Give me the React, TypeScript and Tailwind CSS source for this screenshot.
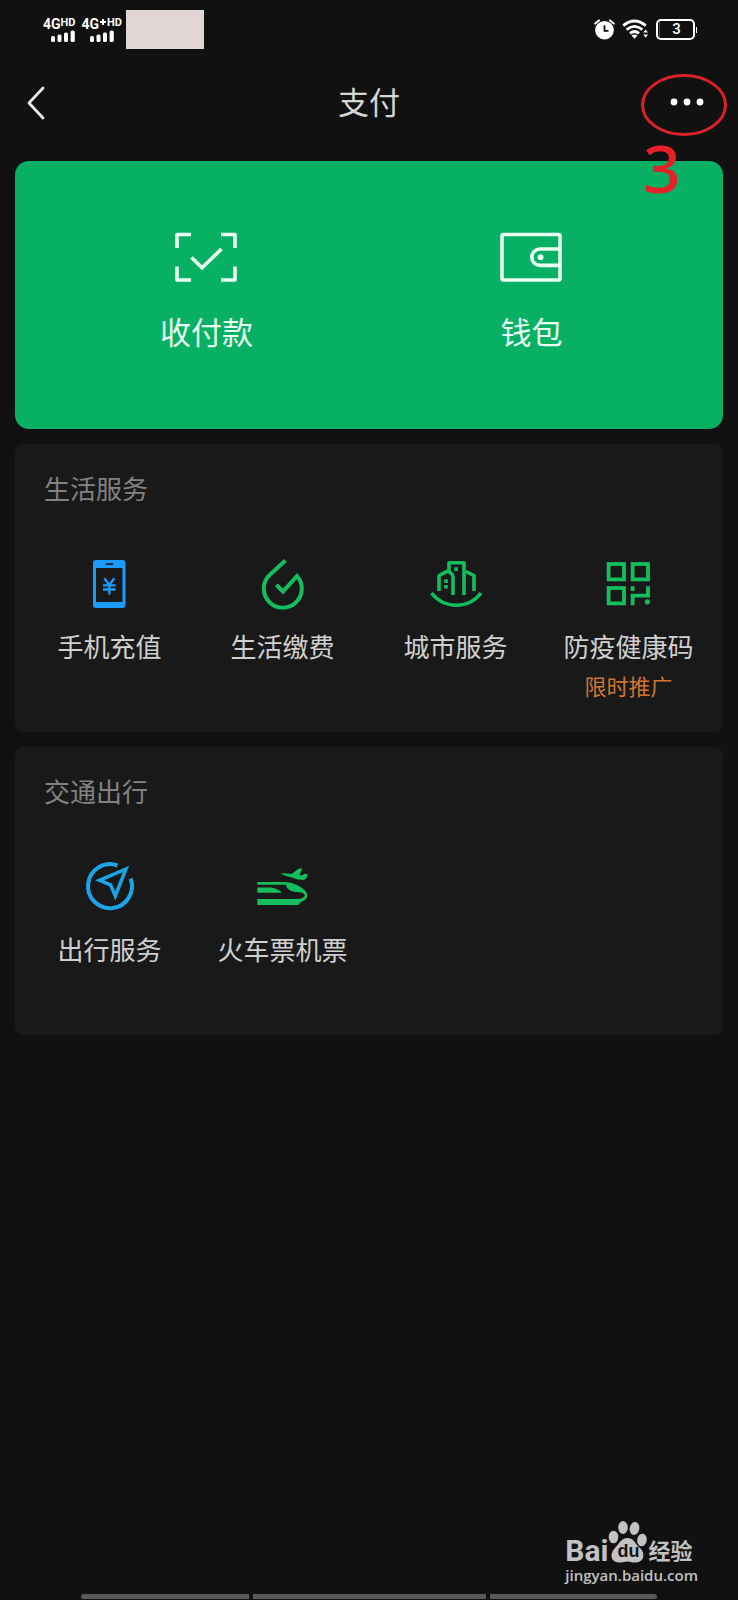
import type { ReactNode } from "react";

function SignalLabel({ plus = false }: { plus?: boolean }) {
  return (
    <div className="flex flex-col font-['Roboto',sans-serif] font-bold text-white">
      <div className="flex items-start">
        <span className="text-[14px] leading-[12px]">4G</span>
        {plus && (
          <svg width="8" height="8" viewBox="0 0 8 8" aria-hidden="true">
            <path d="M4 1v6M1 4h6" stroke="#fff" strokeWidth="2" />
          </svg>
        )}
        <span className="text-[11px] leading-[9px]">HD</span>
      </div>
      <svg className="ml-2" width="24" height="12" viewBox="0 0 24 12" aria-hidden="true">
        <g fill="#fff">
          <rect x="0" y="6" width="4" height="6" rx="1.5" />
          <rect x="6.5" y="4.5" width="4" height="7.5" rx="1.5" />
          <rect x="13" y="2.5" width="4" height="9.5" rx="1.5" />
          <rect x="19.6" y="0.5" width="4.2" height="11.5" rx="1.5" />
        </g>
      </svg>
    </div>
  );
}

function StatusBar() {
  return (
    <div className="flex h-[59px] items-center justify-between pr-[41px] pl-[43px]">
      <div className="flex items-center">
        <SignalLabel />
        <div className="ml-[6px]">
          <SignalLabel plus />
        </div>
        <div className="ml-1 h-[39px] w-[78px] bg-[#e2d5d5]" />
      </div>
      <div className="flex items-center gap-[7px]">
        <svg width="21" height="21" viewBox="0 0 21 21" aria-label="闹钟">
          <circle cx="10.5" cy="11.2" r="9.3" fill="#fff" />
          <path d="M1.2 4.6L5 1.4M19.8 4.6L16 1.4" stroke="#fff" strokeWidth="2" strokeLinecap="round" />
          <path d="M10.5 6.2v5.6h4" fill="none" stroke="#111" strokeWidth="1.8" />
        </svg>
        <svg width="27" height="21" viewBox="0 0 27 21" aria-label="无线网络">
          <g fill="none" stroke="#fff" strokeWidth="2.8">
            <path d="M1.2 6.6Q12.5-2.6 23.8 6.6" />
            <path d="M4.6 10.6Q12.5 4.2 20.4 10.6" />
            <path d="M8 14.4Q12.5 10.600 17 14.4" />
          </g>
          <path d="M9.6 16.6Q12.5 14.6 15.4 16.6L12.5 19.8Z" fill="#fff" />
          <path d="M21.2 13.6L23.6 10.6L26 13.6ZM21.2 15.6h4.8L23.6 18.8Z" fill="#fff" />
        </svg>
        <div className="flex items-center">
          <div className="flex h-[21px] w-[39px] items-center rounded-[5px] border-2 border-white pl-px">
            <span className="h-[15px] w-px bg-[#b3261e]" />
            <span className="flex-1 text-center font-['Roboto',sans-serif] text-[15px] leading-[17px] font-medium text-white">
              3
            </span>
          </div>
          <span className="ml-px h-[6px] w-px bg-white" />
        </div>
      </div>
    </div>
  );
}

function NavBar() {
  return (
    <header className="grid h-[88px] grid-cols-[1fr_auto_1fr] items-center px-[11px]">
      <button type="button" aria-label="返回" className="justify-self-start pb-px pl-[13px]">
        <svg width="24" height="34" viewBox="0 0 24 34">
          <path d="M19 2L5 17L19 32" fill="none" stroke="#e6e6e6" strokeWidth="2.8" strokeLinecap="round" strokeLinejoin="round" />
        </svg>
      </button>
      <h1 className="pb-1 text-[31px] leading-10 text-[#d6d6d6]">支付</h1>
      <div className="relative justify-self-end">
        <button type="button" aria-label="更多" className="block">
          <svg width="86" height="68" viewBox="0 0 86 68">
            <g fill="#fff">
              <circle cx="33" cy="33" r="3.4" />
              <circle cx="46" cy="33" r="3.4" />
              <circle cx="59" cy="33" r="3.4" />
            </g>
            <ellipse cx="43" cy="36" rx="41.5" ry="29.5" fill="none" stroke="#dc2228" strokeWidth="3" />
          </svg>
        </button>
        <span className="absolute top-[56px] left-0 w-[42px] text-center font-['Noto_Sans',sans-serif] text-[66px] leading-[84px] font-medium text-[#e8202a]">
          3
        </span>
      </div>
    </header>
  );
}

function HeroAction({ label, children }: { label: string; children: ReactNode }) {
  return (
    <button type="button" className="flex flex-col items-center gap-7 text-[31px] leading-10 text-[#e9fff3]">
      {children}
      <span>{label}</span>
    </button>
  );
}

function HeroCard() {
  return (
    <section className="grid h-[268px] grid-cols-2 items-start rounded-[14px] bg-[#07b062] px-[29px] pt-[70px]">
      <HeroAction label="收付款">
        <svg width="64" height="52" viewBox="1 0 64 52" fill="none" stroke="currentColor" strokeWidth="3.6">
          <path d="M3 17V3.5H17M47 3.5H61V17M61 35.500V49H47M17 49H3V35.500" strokeLinejoin="round" />
          <path d="M17.500 26.500L28 36.800L47.500 18" />
        </svg>
      </HeroAction>
      <HeroAction label="钱包">
        <svg width="64" height="52" viewBox="1 0 64 52" fill="none" stroke="currentColor" strokeWidth="3.6">
          <rect x="3" y="3.5" width="58" height="45.500" rx="1.5" />
          <path d="M61 18H41a8.200 8.200 0 0 0 0 16.400H61" />
          <circle cx="41.5" cy="26.200" r="3" fill="currentColor" stroke="none" />
        </svg>
      </HeroAction>
    </section>
  );
}

const BLUE = "#1a9bff";
const GREEN = "#14bd5e";

function PhoneIcon() {
  return (
    <svg width="56" height="56" viewBox="1 0 56 56">
      <path
        fill={BLUE}
        fillRule="evenodd"
        d="M15 4H41.500a3 3 0 0 1 3 3V49a3 3 0 0 1-3 3H15a3 3 0 0 1-3-3V7a3 3 0 0 1 3-3ZM15 12V46H41.500V12ZM25.500 7.300a.9.9 0 0 0 0 1.800h6a.9.9 0 0 0 0-1.800Z"
      />
      <path d="M23.300 22.200L28.300 29L33.300 22.200M28.300 29V38.500M22 29.300H34.600M22 33.500H34.600" fill="none" stroke={BLUE} strokeWidth="2.3" />
    </svg>
  );
}

function DropIcon() {
  return (
    <svg width="56" height="56" viewBox="0 0 56 56">
      <path d="M30.500 4.500L14.800 18.800A19 19 0 1 0 42 20L28 35.500L21.300 28.800" fill="none" stroke={GREEN} strokeWidth="4" />
    </svg>
  );
}

function CityIcon() {
  return (
    <svg width="56" height="56" viewBox="0 0 56 56">
      <g fill="none" stroke={GREEN} strokeWidth="3.6" strokeLinejoin="round">
        <path d="M3.500 37Q13 49.200 28.300 49.200T53 37" />
        <path d="M11 35V19.500L19 15.300Q25 17 25 21V39" />
        <path d="M21 15.500V6.800H36V39" />
        <path d="M37.500 15.300L46 19.500V35" />
      </g>
      <path d="M26.300 11.300h3.600v3.600h-3.600zM16.200 23.300h3.600v3.600h-3.600zM16.200 28.900h3.600v3.600h-3.600z" fill={GREEN} />
    </svg>
  );
}

function HealthCodeIcon() {
  return (
    <svg width="56" height="56" viewBox="1 0 56 56">
      <g fill="none" stroke={GREEN} strokeWidth="3.8">
        <rect x="8.600" y="8" width="15.400" height="15.400" />
        <rect x="32.600" y="8" width="15.400" height="15.400" />
        <rect x="8.600" y="32" width="15.400" height="15.400" />
        <path d="M32.600 49.200V39.600H48V30.200M32.600 30.200V35" />
      </g>
      <circle cx="47.300" cy="45.800" r="2.600" fill={GREEN} />
    </svg>
  );
}

function CompassIcon() {
  return (
    <svg width="56" height="56" viewBox="1 1 56 56">
      <g fill="none" stroke="#1aa5e8" strokeWidth="4">
        <path d="M36.500 7.500A22 22 0 1 0 49.600 20.500" />
        <path d="M45 11L18.500 22.300L29.500 26.800L34.300 38Z" strokeWidth="3.500" strokeLinejoin="miter" />
      </g>
    </svg>
  );
}

function TrainIcon() {
  return (
    <svg width="56" height="56" viewBox="0 0 56 56" fill={GREEN}>
      <path d="M2.300 23H29C38 23 46 27.500 50 31.500C53.500 35 52.800 39.500 49 41.500C46.800 42.800 44.500 43.200 43.500 46H2.300V40H42C46.500 40 50.500 38 49.500 35.500C48.500 33.500 44.500 33.300 41 33C35.500 32.500 31.500 30 31 25.700H2.300Z" />
      <path d="M2.300 28.500H15C20 28.800 24.500 31 27 33.800H2.300Z" />
      <path d="M25.300 14.300Q31 13.800 36.500 15L43.500 9.700L47.300 9.300L44.500 16.300Q47.500 16.500 49.500 14.800L53 15.300Q52 19.500 49 21Q43 21 37 18.500Q30 17.300 25.300 14.300Z" />
    </svg>
  );
}

type Service = { label: string; note?: string; icon: ReactNode };

function ServiceSection({ title, services }: { title: string; services: Service[] }) {
  return (
    <section className="min-h-[288px] rounded-lg bg-[#191919] pt-6">
      <h2 className="pl-[29px] text-[26px] leading-10 text-[#828282]">{title}</h2>
      <ul className="mt-12 grid grid-cols-4 px-2">
        {services.map((s) => (
          <li key={s.label}>
            <button type="button" className="flex w-full flex-col items-center whitespace-nowrap">
              {s.icon}
              <span className="mt-4 text-[26px] leading-9 text-[#d0d0d0]">{s.label}</span>
              {s.note && <span className="mt-1 text-[22px] leading-[34px] text-[#cf7534]">{s.note}</span>}
            </button>
          </li>
        ))}
      </ul>
    </section>
  );
}

const lifeServices: Service[] = [
  { label: "手机充值", icon: <PhoneIcon /> },
  { label: "生活缴费", icon: <DropIcon /> },
  { label: "城市服务", icon: <CityIcon /> },
  { label: "防疫健康码", note: "限时推广", icon: <HealthCodeIcon /> },
];

const travelServices: Service[] = [
  { label: "出行服务", icon: <CompassIcon /> },
  { label: "火车票机票", icon: <TrainIcon /> },
];

function Watermark() {
  return (
    <div className="mr-10 flex flex-col self-end text-[#c2c2c2]">
      <div className="flex items-end">
        <span className="font-['Roboto',sans-serif] text-[30px] leading-[26px] font-bold">Bai</span>
        <div className="relative">
          <svg width="40" height="44" viewBox="0 0 40 44" fill="currentColor" aria-hidden="true">
            <ellipse cx="5.500" cy="17" rx="4.800" ry="6.300" />
            <ellipse cx="15" cy="7.500" rx="4.800" ry="6.500" />
            <ellipse cx="26.500" cy="8.500" rx="4.800" ry="6.500" transform="rotate(10 26.500 8.500)" />
            <ellipse cx="34" cy="20" rx="4.800" ry="6.300" transform="rotate(10 34 20)" />
            <path d="M19.500 18C26 18 27 24 32 28C37.500 33 36.500 42 28 42.500C24 42.800 22 41.500 19.500 41.500S14 42.800 11 42.500C2.500 42 1.500 34 6.500 28.500C11 24 13 18 19.500 18Z" />
          </svg>
          <span className="absolute inset-x-0 bottom-1 text-center font-['Liberation_Sans',sans-serif] text-[18px] leading-[18px] font-bold text-[#151515]">
            du
          </span>
        </div>
        <span className="text-[22px] leading-[30px] font-bold">经验</span>
      </div>
      <span className="font-['Open_Sans',sans-serif] text-[15px] leading-[22px] font-semibold">jingyan.baidu.com</span>
    </div>
  );
}

function SystemNavigation() {
  return (
    <div className="mx-auto mt-2 mb-px flex h-[5px] w-[78%] gap-1">
      <span className="flex-[168] rounded-l-full bg-[#595959]" />
      <span className="flex-[232] bg-[#595959]" />
      <span className="flex-[167] rounded-r-full bg-[#595959]" />
    </div>
  );
}

export default function App() {
  return (
    <div className="flex min-h-screen flex-col bg-[#111111] font-['Noto_Sans_CJK_SC',sans-serif]">
      <StatusBar />
      <NavBar />
      <main className="mt-[14px] flex flex-col gap-[15px] px-[15px]">
        <HeroCard />
        <ServiceSection title="生活服务" services={lifeServices} />
        <ServiceSection title="交通出行" services={travelServices} />
      </main>
      <footer className="mt-auto flex flex-col pt-8">
        <Watermark />
        <SystemNavigation />
      </footer>
    </div>
  );
}
